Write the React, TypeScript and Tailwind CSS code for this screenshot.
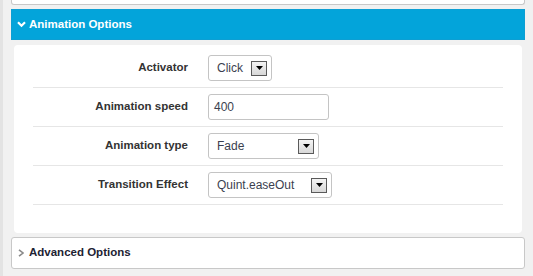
import React from "react";

function Arrow() {
  return (
    <span className="flex h-[15px] w-[16px] items-center justify-center border border-[#5a5a5a] bg-gradient-to-b from-[#f4f4f4] to-[#d8d8d8]">
      <svg width="7" height="4" viewBox="0 0 7 4">
        <path d="M0 0 H7 L3.5 4 Z" fill="#000" />
      </svg>
    </span>
  );
}

function Select({ value, width }: { value: string; width: string }) {
  return (
    <div
      className={`flex h-[26px] items-center justify-between rounded-[3px] border border-[#c4c4c4] bg-white pl-[8px] pr-[4px] ${width}`}
    >
      <span className="text-[12px] text-[#3b3f4f]">{value}</span>
      <Arrow />
    </div>
  );
}

function Row({ label, children }: { label: string; children: React.ReactNode }) {
  return (
    <div className="flex h-[39px] items-center border-b border-[#e6e6e6]">
      <div className="w-[155px] text-right text-[11.5px] font-bold text-[#333]">{label}</div>
      <div className="ml-[20px]">{children}</div>
    </div>
  );
}

export default function App() {
  return (
    <div
      className="flex h-[276px] w-[533px] bg-[#f1f1f1]"
      style={{ fontFamily: '"Liberation Sans", Arial, sans-serif' }}
    >
      <div className="w-[3px] bg-[#e3e3e3]" />
      <div className="ml-[8px] flex w-[514px] flex-col">
        <div className="h-[5px] rounded-b-[3px] border-x border-b border-[#c8c8c8] bg-white" />
        <div className="mt-[4px] flex h-[31px] items-center border border-[#0d9fd3] bg-[#03a4da] pl-[5px] pr-[1px]">
          <svg width="9" height="7" viewBox="0 0 9 7" className="mr-[3px]">
            <path d="M1 1.3 L4.5 4.8 L8 1.3" stroke="#fff" strokeWidth="2.2" fill="none" />
          </svg>
          <span className="text-[11.5px] font-bold text-white">Animation Options</span>
        </div>
        <div className="mx-[3px] mt-[5px] flex h-[188px] flex-col rounded-[4px] bg-white px-[19px] pt-[4px]">
          <Row label="Activator">
            <Select value="Click" width="w-[64px]" />
          </Row>
          <Row label="Animation speed">
            <div className="flex h-[26px] w-[121px] items-center rounded-[3px] border border-[#c4c4c4] bg-white pl-[5px]">
              <span className="text-[12px] text-[#3b3f4f]">400</span>
            </div>
          </Row>
          <Row label="Animation type">
            <Select value="Fade" width="w-[111px]" />
          </Row>
          <Row label="Transition Effect">
            <Select value="Quint.easeOut" width="w-[124px]" />
          </Row>
        </div>
        <div className="mt-[4px] flex h-[32px] items-center rounded-[3px] border border-[#c8c8c8] bg-white pl-[6px]">
          <svg width="6" height="8" viewBox="0 0 6 8" className="mr-[5px]">
            <path d="M1 0.8 L5 4 L1 7.2" stroke="#8a8a8a" strokeWidth="1.6" fill="none" />
          </svg>
          <span className="text-[11.5px] font-bold text-[#1d2233]">Advanced Options</span>
        </div>
      </div>
    </div>
  );
}
